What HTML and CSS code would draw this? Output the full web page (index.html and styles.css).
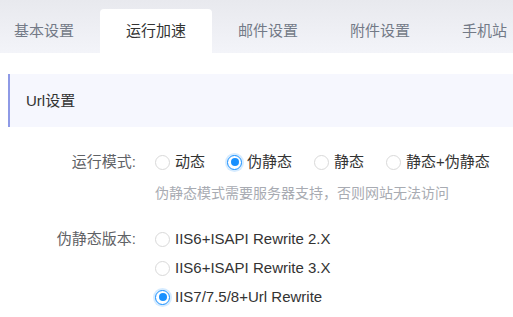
FILE: index.html
```html
<!DOCTYPE html>
<html lang="zh-CN">
<head>
    <meta charset="UTF-8">
    <title>运行加速</title>
    <link rel="stylesheet" href="styles.css">
</head>
<body>
    <div class="tabs">
        <ul class="tab-list">
            <li class="tab">基本设置</li>
            <li class="tab active">运行加速</li>
            <li class="tab">邮件设置</li>
            <li class="tab">附件设置</li>
            <li class="tab">手机站</li>
        </ul>
    </div>

    <div class="panel">
        <div class="section-title">Url设置</div>

        <form class="form">
            <div class="form-row">
                <label class="form-label">运行模式:</label>
                <div class="form-control">
                    <div class="radio-group">
                        <label class="radio"><span class="radio-dot"></span>动态</label>
                        <label class="radio checked"><span class="radio-dot"></span>伪静态</label>
                        <label class="radio"><span class="radio-dot"></span>静态</label>
                        <label class="radio"><span class="radio-dot"></span>静态+伪静态</label>
                    </div>
                    <div class="hint">伪静态模式需要服务器支持，否则网站无法访问</div>
                </div>
            </div>

            <div class="form-row">
                <label class="form-label">伪静态版本:</label>
                <div class="form-control">
                    <div class="radio-list">
                        <label class="radio"><span class="radio-dot"></span>IIS6+ISAPI Rewrite 2.X</label>
                        <label class="radio"><span class="radio-dot"></span>IIS6+ISAPI Rewrite 3.X</label>
                        <label class="radio checked"><span class="radio-dot"></span>IIS7/7.5/8+Url Rewrite</label>
                    </div>
                </div>
            </div>
        </form>
    </div>
</body>
</html>
```

FILE: styles.css
```css
body {
    margin: 0;
    background: #fff;
    font-family: "Liberation Sans", "Noto Sans CJK SC", sans-serif;
    font-size: 15px;
    color: #333;
    overflow: hidden;
}

.tabs {
    height: 53px;
    background: linear-gradient(to bottom, #e8e9ee, #f3f4f9);
    display: flex;
    align-items: flex-end;
    overflow: hidden;
}

.tab-list {
    display: flex;
    list-style: none;
    margin: 0 0 0 -12px;
    padding: 0;
}

.tab {
    flex: none;
    padding: 0 26px;
    height: 44px;
    line-height: 44px;
    color: #737a87;
    white-space: nowrap;
}

.tab.active {
    background: #fff;
    color: #333;
    border-radius: 4px 4px 0 0;
}

.panel {
    padding: 21px 0 0 8px;
}

.section-title {
    height: 53px;
    line-height: 53px;
    background: #f6f7fe;
    border-left: 2px solid #8e9ae6;
    padding-left: 16px;
    color: #333;
}

.form {
    margin-top: 23px;
}

.form-row {
    display: flex;
    margin-bottom: 22px;
}

.form-label {
    flex: none;
    width: 128px;
    line-height: 24px;
    text-align: right;
    color: #5f6266;
}

.form-control {
    margin-left: 19px;
}

.radio-group {
    display: flex;
}

.radio-group .radio {
    margin-right: 22px;
}

.radio-list {
    display: flex;
    flex-direction: column;
    gap: 5px;
}

.radio {
    display: flex;
    align-items: center;
    line-height: 24px;
    color: #333;
    white-space: nowrap;
}

.radio-dot {
    width: 15px;
    height: 15px;
    border: 1px solid #d9d9d9;
    border-radius: 50%;
    box-sizing: border-box;
    margin-right: 5px;
    position: relative;
    background: #fff;
}

.radio.checked .radio-dot {
    border-color: #1890ff;
    box-shadow: 0 0 0 2px rgba(24, 144, 255, 0.18);
}

.radio.checked .radio-dot::after {
    content: "";
    position: absolute;
    left: 2.5px;
    top: 2.5px;
    width: 8px;
    height: 8px;
    border-radius: 50%;
    background: #1890ff;
}

.hint {
    margin-top: 7px;
    line-height: 24px;
    font-size: 14px;
    color: #a8abb2;
}
```
